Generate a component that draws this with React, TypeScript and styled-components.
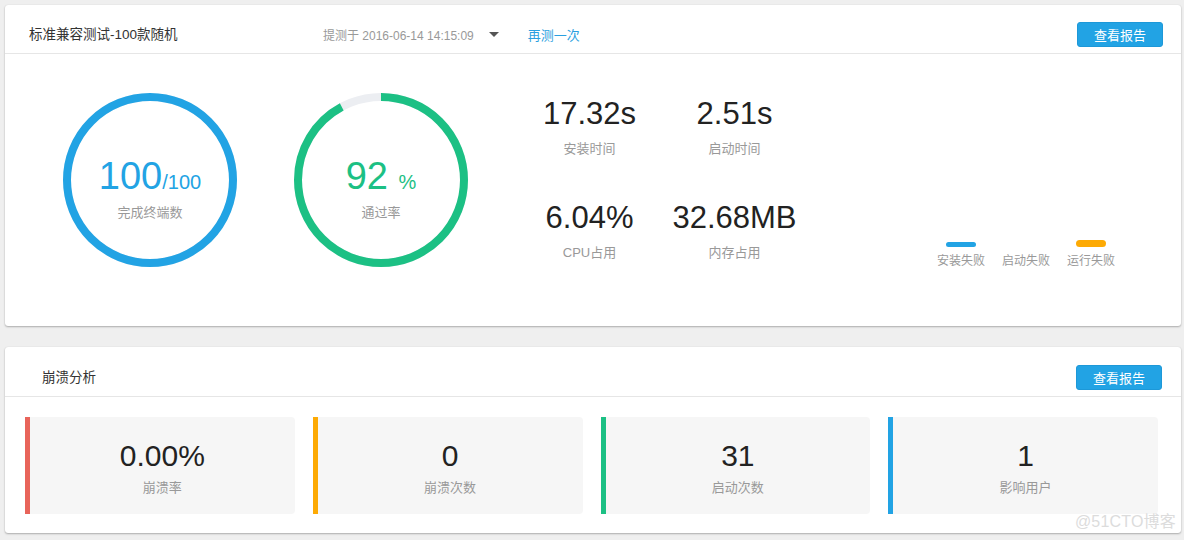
import React from "react";
import styled, { createGlobalStyle } from "styled-components";

const GlobalStyle = createGlobalStyle`
  html, body {
    margin: 0;
    padding: 0;
    background: #efefef;
    font-family: "Liberation Sans", "Noto Sans CJK SC", sans-serif;
    color: #333;
  }
`;

const Page = styled.div`
  width: 1184px;
  height: 540px;
  padding: 5px 3px 0 5px;
  box-sizing: border-box;
  display: flex;
  flex-direction: column;
  gap: 21px;
  position: relative;
  overflow: hidden;
`;

const Card = styled.div`
  background: #fff;
  border-radius: 3px;
  box-shadow: 0 1px 2px rgba(0, 0, 0, 0.28), 0 0 1px rgba(0, 0, 0, 0.12);
`;

const Header = styled.div<{ $padLeft: number; $padRight: number; $padTop: number }>`
  display: flex;
  align-items: center;
  padding: ${(p) => p.$padTop}px ${(p) => p.$padRight}px 6px ${(p) => p.$padLeft}px;
  border-bottom: 1px solid #e6e6e6;
  height: 25px;
`;

const Title = styled.div<{ $width?: number }>`
  font-size: 13.5px;
  color: #333;
  line-height: 25px;
  ${(p) => (p.$width ? `width: ${p.$width}px;` : "")}
`;

const DateText = styled.span`
  font-size: 12px;
  color: #999;
`;

const Caret = styled.span`
  margin-left: 15px;
  width: 0;
  height: 0;
  border-left: 5px solid transparent;
  border-right: 5px solid transparent;
  border-top: 5px solid #555;
`;

const Retest = styled.a`
  margin-left: 29px;
  font-size: 13px;
  color: #2b9fe0;
  cursor: pointer;
`;

const ReportButton = styled.button`
  margin-left: auto;
  width: 86px;
  height: 25px;
  border: 1px solid #1d98d8;
  border-radius: 3px;
  background: #22a3e4;
  color: #fff;
  font-family: inherit;
  font-size: 13px;
  padding: 0;
  cursor: pointer;
`;

const Overview = styled.div`
  display: flex;
  align-items: flex-start;
  height: 272px;
  box-sizing: border-box;
  padding: 39px 0 0 58px;
`;

const Ring = styled.div`
  position: relative;
  width: 174px;
  height: 174px;
  flex-shrink: 0;
  & + & {
    margin-left: 57px;
  }
  svg {
    display: block;
  }
`;

const RingText = styled.div`
  position: absolute;
  inset: 0;
  display: flex;
  flex-direction: column;
  align-items: center;
  padding-top: 63px;
`;

const RingValue = styled.div<{ $color: string }>`
  color: ${(p) => p.$color};
  font-size: 38px;
  line-height: 40px;
  white-space: nowrap;
  small {
    font-size: 20px;
  }
`;

const RingLabel = styled.div`
  font-size: 13px;
  color: #999;
  margin-top: 3px;
  line-height: 16px;
`;

const MetricGrid = styled.div`
  margin-left: 49px;
  display: grid;
  grid-template-columns: 145px 145px;
  row-gap: 43px;
  margin-top: 3px;
`;

const Metric = styled.div`
  display: flex;
  flex-direction: column;
  align-items: center;
`;

const MetricValue = styled.div`
  font-size: 31px;
  line-height: 36px;
  color: #222;
`;

const MetricLabel = styled.div`
  font-size: 13px;
  line-height: 16px;
  color: #999;
  margin-top: 9px;
`;

const Legend = styled.div`
  margin-left: auto;
  margin-right: 66px;
  margin-top: 147px;
  display: flex;
  gap: 17px;
`;

const LegendItem = styled.div`
  display: flex;
  flex-direction: column;
  align-items: center;
  font-size: 12px;
  color: #999;
  line-height: 14px;
`;

const LegendBar = styled.span<{ $color: string; $h: number }>`
  width: 30px;
  height: ${(p) => p.$h}px;
  border-radius: 4px;
  background: ${(p) => p.$color};
  margin-top: ${(p) => 7 - p.$h}px;
  margin-bottom: 7px;
`;

const StatRow = styled.div`
  display: grid;
  grid-template-columns: repeat(4, 1fr);
  gap: 18px;
  padding: 20px 23px 19px 20px;
`;

const StatBox = styled.div<{ $color: string }>`
  height: 97px;
  background: #f6f6f6;
  border-left: 5px solid ${(p) => p.$color};
  border-radius: 0 4px 4px 0;
  display: flex;
  flex-direction: column;
  align-items: center;
  justify-content: center;
`;

const StatValue = styled.div`
  font-size: 30px;
  line-height: 34px;
  color: #222;
  margin-top: 3px;
`;

const StatLabel = styled.div`
  font-size: 13px;
  line-height: 16px;
  color: #999;
  margin-top: 7px;
`;

const Watermark = styled.div`
  position: absolute;
  right: 8px;
  bottom: 8px;
  font-size: 16px;
  color: #dcdcdc;
  letter-spacing: 0.2px;
`;

const BLUE = "#22a3e4";
const GREEN = "#1cc084";

function Donut({ percent, color }: { percent: number; color: string }) {
  const r = 83;
  const c = 2 * Math.PI * r;
  const on = (c * percent) / 100;
  return (
    <svg width="174" height="174" viewBox="0 0 174 174">
      <circle cx="87" cy="87" r={r} fill="none" stroke="#eceef2" strokeWidth="8" />
      <circle
        cx="87"
        cy="87"
        r={r}
        fill="none"
        stroke={color}
        strokeWidth="8"
        strokeDasharray={`${on} ${c}`}
        transform="rotate(-90 87 87)"
      />
    </svg>
  );
}

const metrics = [
  { value: "17.32s", label: "安装时间" },
  { value: "2.51s", label: "启动时间" },
  { value: "6.04%", label: "CPU占用" },
  { value: "32.68MB", label: "内存占用" },
];

const stats = [
  { value: "0.00%", label: "崩溃率", color: "#e8645a" },
  { value: "0", label: "崩溃次数", color: "#fdaa04" },
  { value: "31", label: "启动次数", color: GREEN },
  { value: "1", label: "影响用户", color: BLUE },
];

export default function App() {
  return (
    <Page>
      <GlobalStyle />
      <Card>
        <Header $padLeft={24} $padRight={18} $padTop={17}>
          <Title $width={294}>标准兼容测试-100款随机</Title>
          <DateText>提测于 2016-06-14 14:15:09</DateText>
          <Caret />
          <Retest>再测一次</Retest>
          <ReportButton>查看报告</ReportButton>
        </Header>
        <Overview>
          <Ring>
            <Donut percent={100} color={BLUE} />
            <RingText>
              <RingValue $color={BLUE}>
                100<small>/100</small>
              </RingValue>
              <RingLabel>完成终端数</RingLabel>
            </RingText>
          </Ring>
          <Ring>
            <Donut percent={92} color={GREEN} />
            <RingText>
              <RingValue $color={GREEN}>
                92 <small>%</small>
              </RingValue>
              <RingLabel>通过率</RingLabel>
            </RingText>
          </Ring>
          <MetricGrid>
            {metrics.map((m) => (
              <Metric key={m.label}>
                <MetricValue>{m.value}</MetricValue>
                <MetricLabel>{m.label}</MetricLabel>
              </Metric>
            ))}
          </MetricGrid>
          <Legend>
            <LegendItem>
              <LegendBar $color={BLUE} $h={5} />
              安装失败
            </LegendItem>
            <LegendItem>
              <LegendBar $color="transparent" $h={5} />
              启动失败
            </LegendItem>
            <LegendItem>
              <LegendBar $color="#fdaa04" $h={7} />
              运行失败
            </LegendItem>
          </Legend>
        </Overview>
      </Card>
      <Card>
        <Header $padLeft={37} $padRight={19} $padTop={18}>
          <Title>崩溃分析</Title>
          <ReportButton>查看报告</ReportButton>
        </Header>
        <StatRow>
          {stats.map((s) => (
            <StatBox key={s.label} $color={s.color}>
              <StatValue>{s.value}</StatValue>
              <StatLabel>{s.label}</StatLabel>
            </StatBox>
          ))}
        </StatRow>
      </Card>
      <Watermark>@51CTO博客</Watermark>
    </Page>
  );
}
